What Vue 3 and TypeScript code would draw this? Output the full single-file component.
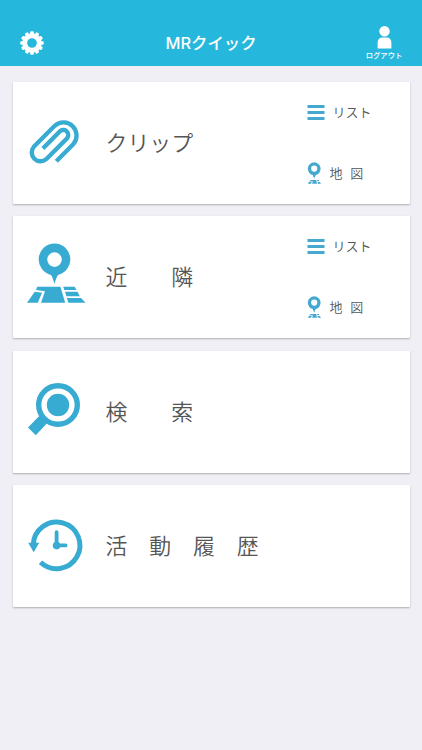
<script setup lang="ts">
interface Card {
  id: 'clip' | 'nearby' | 'search' | 'history'
  label: string
  shortcuts: boolean
}

const cards: Card[] = [
  { id: 'clip', label: 'クリップ', shortcuts: true },
  { id: 'nearby', label: '近　　隣', shortcuts: true },
  { id: 'search', label: '検　　索', shortcuts: false },
  { id: 'history', label: '活　動　履　歴', shortcuts: false },
]
const teeth: number[] = Array.from({ length: 12 }, (_, i) => i * 30)
</script>

<template>
  <div class="screen">
    <header class="bar">
      <button class="settings" aria-label="設定">
        <svg width="24" height="24" viewBox="-12 -12 24 24">
          <circle r="7.3" fill="none" stroke="#fff" stroke-width="4.9" />
          <rect v-for="a in teeth" :key="a" x="-1.8" y="-11.7" width="3.6" height="4" rx="1" fill="#fff" :transform="`rotate(${a})`" />
        </svg>
      </button>
      <h1 class="title">MRクイック</h1>
      <button class="logout">
        <svg width="16" height="23" viewBox="0 0 16 23" fill="#fff">
          <circle cx="8.5" cy="5.3" r="5.2" />
          <path d="M1.6 22.4V17.5Q1.6 11.6 6.5 11.6H10.5Q15.4 11.6 15.4 17.5V22.4Z" />
        </svg>
        <span>ログアウト</span>
      </button>
    </header>
    <main class="cards">
      <section v-for="card in cards" :key="card.id" class="card">
        <div class="icon">
          <svg v-if="card.id === 'clip'" width="66" height="66" viewBox="22 110 66 66" fill="none" stroke="#38abd2" stroke-width="4.3">
            <path d="M56.3 161.2L73.2 144.3A13.1 13.1 0 0 0 54.7 125.8L33.8 146.8A8.8 8.8 0 0 0 46.2 159.2L67.3 138A5 5 0 0 0 60.3 131L42.9 148.4" />
          </svg>
          <svg v-else-if="card.id === 'nearby'" width="66" height="66" viewBox="22 244.3 66 66" fill="#38abd2">
            <path fill-rule="evenodd" d="M54.5 243.8A15.9 15.9 0 0 1 58 275.2C56.5 277 55.5 281 54.5 284C53.5 281 52.6 277 51 275.2A15.9 15.9 0 0 1 54.5 243.8ZM54.5 252.6A7.3 7.3 0 1 0 54.5 267.2A7.3 7.3 0 1 0 54.5 252.6Z" />
            <path d="M37.2 287H60.4L65.2 303H41L45 291.6L36 290.4ZM34.8 292L42 293L37.8 303H27ZM63.2 287H74.6L76.6 290.3H64.3ZM65 292H77.5L79.8 296.5H66.4ZM66.8 298.2H81L85.6 303H68.4Z" />
          </svg>
          <svg v-else-if="card.id === 'search'" width="66" height="66" viewBox="22 379 66 66" fill="#38abd2">
            <circle cx="58" cy="405" r="19.3" fill="none" stroke="#38abd2" stroke-width="5.4" />
            <circle cx="58" cy="405" r="11.2" />
            <path d="M39.2 416L46.8 423.6L35.8 435.2L28 427.4Z" />
          </svg>
          <svg v-else width="66" height="66" viewBox="22 513 66 66" fill="none" stroke="#38abd2">
            <path d="M33.3 545A23.3 23.3 0 1 1 40.5 562.2" stroke-width="5" />
            <path d="M28.2 542.8H39.2L33.7 552.2Z" fill="#38abd2" stroke="none" />
            <path d="M56.6 532.2V545.4H65.6" stroke-width="3.8" stroke-linecap="round" />
            <circle cx="56.6" cy="545.6" r="3.8" fill="#38abd2" stroke="none" />
          </svg>
        </div>
        <h2 class="label">{{ card.label }}</h2>
        <div v-if="card.shortcuts" class="shortcuts">
          <a class="shortcut">
            <svg width="18" height="15" viewBox="0 0 18 15" fill="#45a8ce">
              <path d="M0.5 0H17.5V3H.5ZM.5 6H17.5V9H.5ZM.5 12H17.5V15H.5Z" />
            </svg>
            <span class="list-text">リスト</span>
          </a>
          <a class="shortcut">
            <svg width="15" height="22" viewBox="0 0 15 22" fill="#45a8ce">
              <path fill-rule="evenodd" d="M7.2 .2A6.5 6.5 0 0 1 8.7 13L7.2 16.6L5.7 13A6.5 6.5 0 0 1 7.2 .2ZM7.2 3.5A3.1 3.1 0 1 0 7.2 9.7A3.1 3.1 0 1 0 7.2 3.5Z" />
              <path d="M3.4 18.1H9.2L10 21.7H5L6 19.4L2.8 18.9ZM2.3 19.6L4.8 20L4 21.7H.8ZM9.9 18.1H11.8L12.4 19H10.2ZM10.4 19.9H12.9L14 21.7H10.9Z" />
            </svg>
            <span class="map-text">地 図</span>
          </a>
        </div>
      </section>
    </main>
  </div>
</template>

<style>
body {
  background: #efeff5;
}
</style>

<style scoped>
.screen {
  min-height: 750px;
  background: #efeff5;
  font-family: Inter, "Noto Sans CJK JP", sans-serif;
}
svg {
  overflow: visible;
}
button {
  border: 0;
  padding: 0;
  background: none;
  font-family: inherit;
}
.bar {
  box-sizing: border-box;
  height: 66px;
  padding: 19px 13px 0 20px;
  display: grid;
  grid-template-columns: 50px 1fr 50px;
  align-items: center;
  background: #26b8dc;
  color: #fff;
}
.settings {
  display: flex;
  align-items: center;
  height: 44px;
}
.title {
  margin: 0;
  padding-right: 7px;
  text-align: center;
  font-size: 16.4px;
  line-height: 24px;
  font-weight: 500;
}
.logout {
  display: flex;
  flex-direction: column;
  align-items: center;
  padding-top: 1px;
  color: #fff;
}
.logout span {
  margin-top: 2px;
  font-size: 7.3px;
  line-height: 10px;
  font-weight: 500;
  white-space: nowrap;
}
.cards {
  display: flex;
  flex-direction: column;
  gap: 12.4px;
  padding: 16px 12.5px 0;
}
.card {
  box-sizing: border-box;
  height: 122px;
  display: flex;
  align-items: center;
  padding-left: 9.5px;
  border-radius: 1px;
  background: #fff;
  box-shadow: 0 1px 2px rgba(0, 0, 0, .28);
}
.icon {
  width: 66px;
  height: 66px;
}
.label {
  margin: 0 0 0 17.5px;
  font-size: 21.9px;
  line-height: 30px;
  font-weight: 350;
  color: #555;
  white-space: nowrap;
}
.shortcuts {
  margin-left: auto;
  width: 103px;
  height: 82px;
  display: flex;
  flex-direction: column;
  justify-content: space-between;
}
.shortcut {
  height: 22px;
  display: flex;
  align-items: center;
  font-size: 13px;
  line-height: 20px;
  font-weight: 350;
  color: #555;
}
.shortcut:first-child {
  height: 20px;
}
.list-text {
  margin-left: 8px;
}
.map-text {
  margin-left: 8px;
  word-spacing: 4px;
}
</style>
